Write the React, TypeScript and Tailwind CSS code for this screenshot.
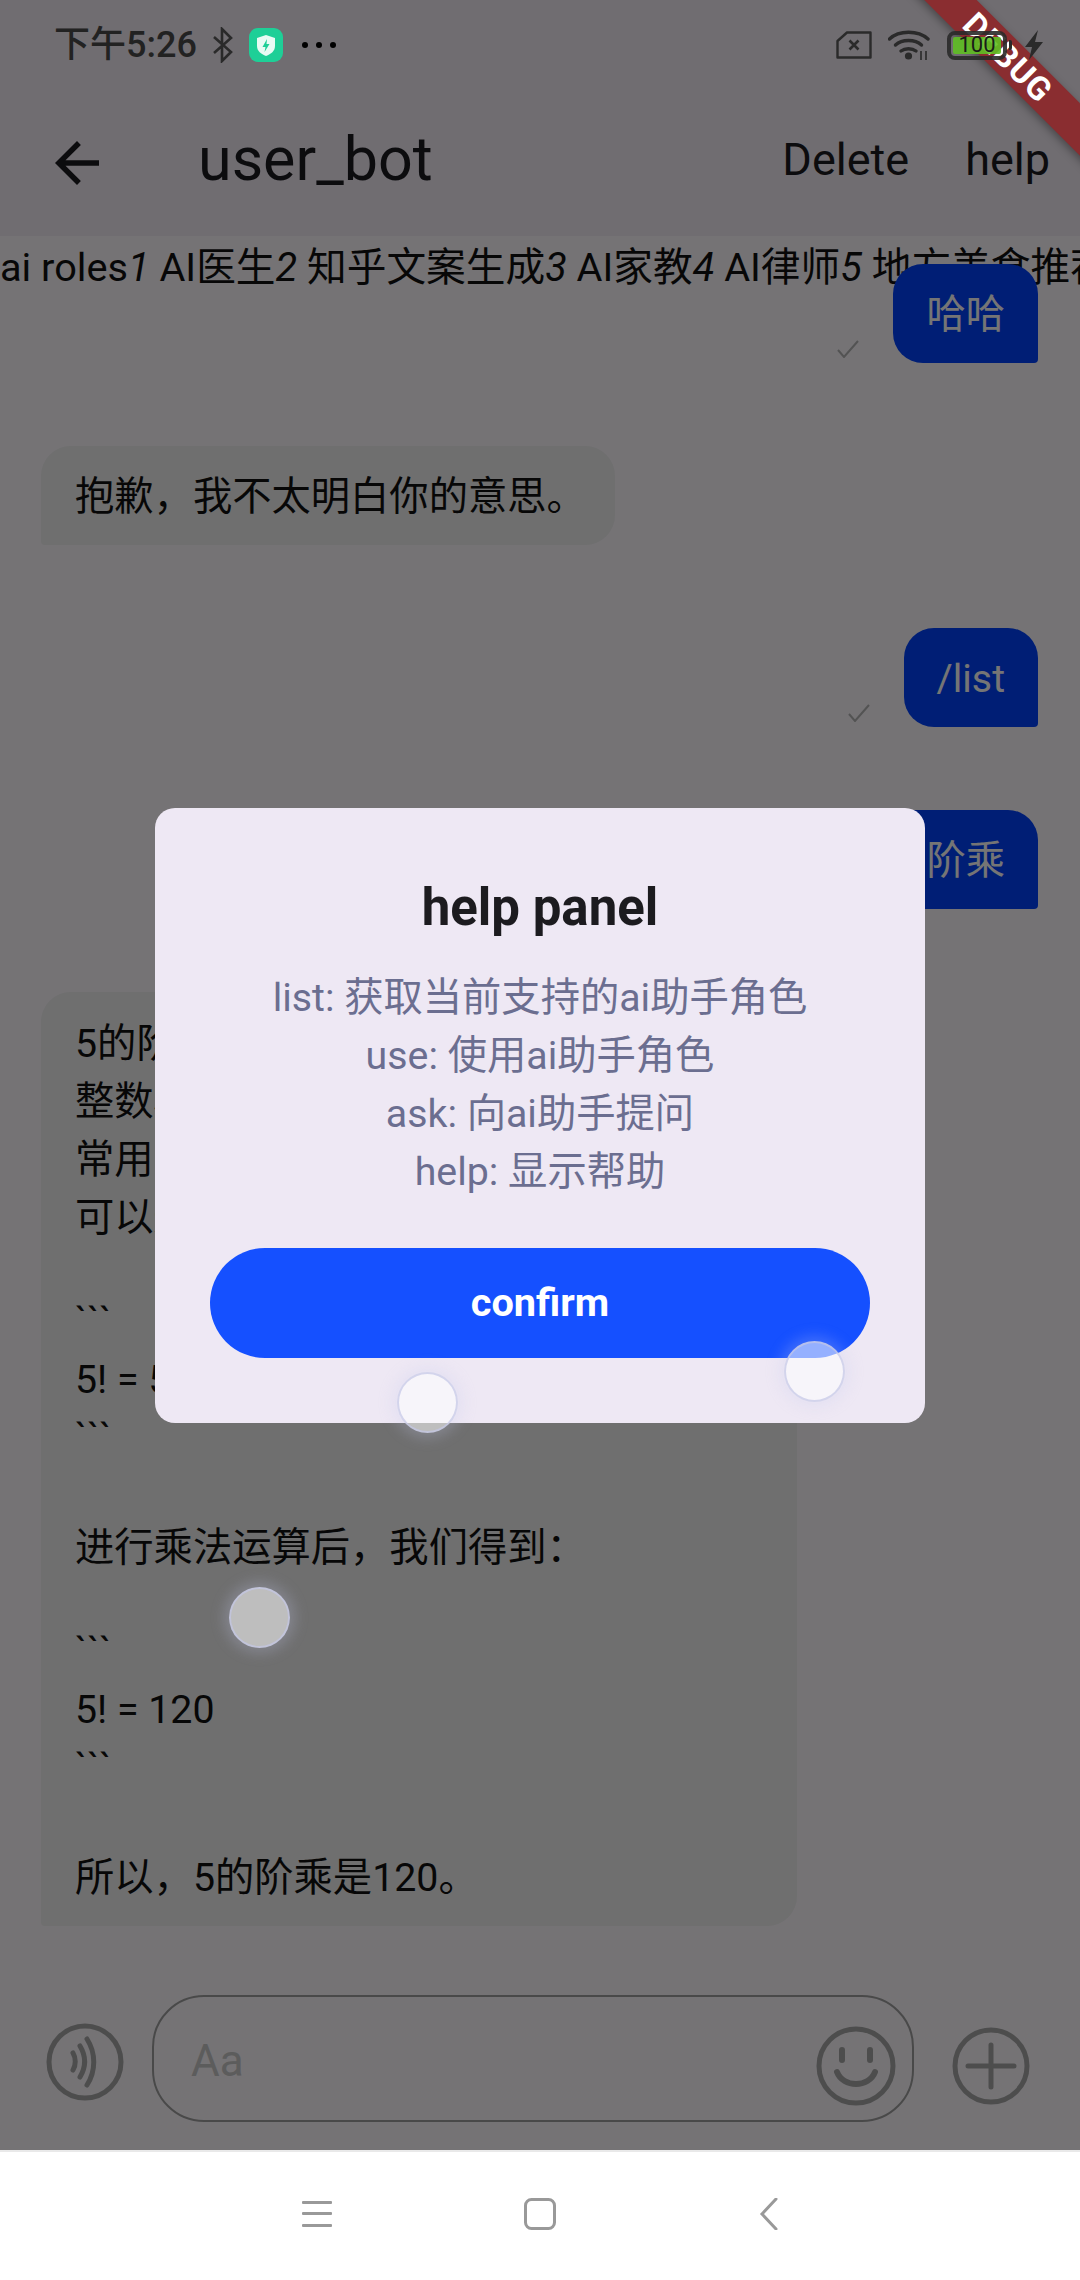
import React from 'react';

const StatusBar: React.FC = () => (
    <div className="absolute top-0 left-0 right-0 h-[90px] flex items-center justify-between pl-[54px] pr-[36px] text-[#222222]">
        <div className="flex items-center">
            <span className="text-[36px] font-medium leading-none w-[140px] whitespace-nowrap">下午5:26</span>
            <svg className="ml-[18px]" width="22" height="36" viewBox="0 0 22 36" fill="none" stroke="#2a2a2a" strokeWidth="2.6">
                <path d="M2 10 L19 25 L10 34 V2 L19 11 L2 26" />
            </svg>
            <svg className="ml-[15px]" width="34" height="34" viewBox="0 0 34 34">
                <rect width="34" height="34" rx="9" fill="#1ecf97" />
                <path d="M17 7 L26 10 V18 C26 23 22 26 17 28 C12 26 8 23 8 18 V10 Z" fill="#e8fbf4" />
                <path d="M18 11 L13.5 19 H16.5 L15.5 24 L20.5 16 H17.5 Z" fill="#1ecf97" />
            </svg>
            <div className="ml-[19px] flex gap-[8px]">
                <span className="w-[6px] h-[6px] rounded-full bg-black" />
                <span className="w-[6px] h-[6px] rounded-full bg-black" />
                <span className="w-[6px] h-[6px] rounded-full bg-black" />
            </div>
        </div>
        <div className="flex items-center">
            <svg width="36" height="28" viewBox="0 0 36 28" fill="none" stroke="#2a2a2a" strokeWidth="2.4" strokeLinejoin="round">
                <path d="M11 1.5 H34.5 V26.5 H1.5 V10 Z" />
                <path d="M13.5 9.5 L22.5 18.5 M22.5 9.5 L13.5 18.5" strokeWidth="2.6" />
            </svg>
            <svg className="ml-[16px]" width="42" height="32" viewBox="0 0 42 32" fill="none" stroke="#2a2a2a" strokeWidth="3.4" strokeLinecap="round">
                <path d="M1.5 10 C11 1 30 1 40 10" />
                <path d="M7.5 16 C14 10 27 10 33.5 16" />
                <path d="M13 22 C17 19 24 19 28 22" />
                <circle cx="20.5" cy="27" r="3.6" fill="#2a2a2a" stroke="none" />
                <path d="M33 22 V31 M38 22 V31" strokeWidth="1.6" strokeLinecap="butt" />
            </svg>
            <div className="ml-[17px] relative w-[60px] h-[29px] rounded-[8px] border-[4px] border-[#2a2a2a]/90 p-[2px]">
                <div className="h-full rounded-[2px] bg-[#5fbf24]/90" />
                <span className="absolute inset-0 flex items-center justify-center text-[22px] leading-none text-[#1a1a1a]">100</span>
            </div>
            <span className="ml-[2px] w-[3px] h-[10px] rounded-r-[2px] bg-[#2a2a2a]" />
            <svg className="ml-[12px]" width="20" height="30" viewBox="0 0 20 30" fill="#2a2a2a">
                <path d="M14 0 L1 17 H8 L5 30 L19 12 H11 Z" />
            </svg>
        </div>
    </div>
);

const Tick: React.FC = () => (
    <svg className="mb-[5px]" width="24" height="18" viewBox="0 0 24 18" fill="none" stroke="#b5b5b5" strokeWidth="2">
        <path d="M2 10 L8 17 L22 1" />
    </svg>
);

const Outgoing: React.FC<{ text: string; tick?: boolean }> = ({ text, tick }) => (
    <div className="flex justify-end items-end gap-[33px]">
        {tick && <Tick />}
        <div className="bg-[#0043ff] text-white text-[39.3px] leading-[57px] px-[33px] pt-[23px] pb-[19px] rounded-[30px] rounded-br-[4px]">
            {text}
        </div>
    </div>
);

const answer: (string | number)[] = [
    '5的阶乘是指从1到5的所有',
    '整数相乘的结果，这是一个',
    '常用的数学运算，我们',
    '可以这样来计算它：',
    46,
    '```',
    '5! = 5 × 4 × 3 × 2 × 1',
    '```',
    52,
    '进行乘法运算后，我们得到：',
    46,
    '```',
    '5! = 120',
    '```',
    52,
    '所以，5的阶乘是120。',
];

const TouchDot: React.FC<{ className: string }> = ({ className }) => (
    <div className={`absolute w-[61px] h-[61px] rounded-full bg-white/55 border-[2px] border-[#c3c6e6]/70 shadow-[0_0_14px_5px_rgba(200,205,240,0.25)] ${className}`} />
);

const Chat: React.FC = () => (
    <div className="h-full flex flex-col bg-[#fefaff] overflow-hidden">
        {/* App bar */}
        <div className="h-[236px] shrink-0 bg-[#f3edf7] pt-[82px] pl-[44px] pr-[30px] flex items-center text-[#1c1b1f]">
            <svg className="mt-[8px]" width="66" height="66" viewBox="0 0 24 24" fill="#1c1b1f">
                <path d="M20 11H7.83l5.59-5.59L12 4l-8 8 8 8 1.41-1.41L7.83 13H20v-2z" />
            </svg>
            <span className="ml-[88px] text-[61px] leading-none flex-1">user_bot</span>
            <span className="text-[45px] leading-none">Delete</span>
            <span className="ml-[56px] text-[45px] leading-none">help</span>
        </div>

        <div className="h-[64px] shrink-0 text-[39.7px] leading-[64px] whitespace-nowrap overflow-hidden text-[#111111]">
            ai roles<i>1</i> AI医生<i>2</i> 知乎文案生成<i>3</i> AI家教<i>4</i> AI律师<i>5</i> 地方美食推荐
        </div>

        {/* Messages */}
        <div className="mt-[-36px] pl-[41px] pr-[42px] flex flex-col gap-[83px]">
            <Outgoing text="哈哈" tick />
            <div className="flex">
                <div className="bg-[#f1f1f1] text-[#111111] text-[39.3px] leading-[57px] pl-[34px] pr-[29px] pt-[23px] pb-[19px] rounded-[30px] rounded-bl-[4px]">
                    抱歉，我不太明白你的意思。
                </div>
            </div>
            <Outgoing text="/list" tick />
            <Outgoing text="5的阶乘" />
            <div className="w-[756px] bg-[#f1f1f1] text-[#111111] text-[39.3px] leading-[58px] pl-[34px] pr-[33px] pt-[23px] pb-[19px] rounded-[30px] rounded-bl-[4px]">
                {answer.map((line, i) =>
                    typeof line === 'number' ? (
                        <div key={i} style={{ height: line }} />
                    ) : (
                        <div key={i} className="whitespace-nowrap">{line}</div>
                    )
                )}
            </div>
        </div>

        {/* Input row */}
        <div className="absolute left-0 right-0 top-[1988px] h-[140px] pl-[46px] flex items-center">
            <svg className="mt-[8px]" width="78" height="78" viewBox="0 0 78 78" fill="none" stroke="#a9a9a9" strokeWidth="5" strokeLinecap="round">
                <circle cx="39" cy="39" r="36" />
                <path d="M27 30 C30 35 30 42 27 47" />
                <path d="M34 23 C40 33 40 44 34 54" />
                <path d="M41 16 C50 30 50 48 41 62" />
            </svg>
            <div className="ml-[28px] w-[762px] h-[127px] rounded-[52px] border-[2px] border-[#a0a0a0] flex items-center justify-between pl-[37px] pr-[16px]">
                <span className="mt-[5px] text-[44px] leading-none text-[#c8c8c8]">Aa</span>
                <svg className="mt-[15px]" width="80" height="80" viewBox="0 0 80 80" fill="none" stroke="#a9a9a9" strokeWidth="5" strokeLinecap="round">
                    <circle cx="40" cy="40" r="37" />
                    <path d="M26 24 V34 M54 24 V34" strokeWidth="6" />
                    <path d="M21 46 C27 62 53 62 59 46" strokeWidth="6" />
                </svg>
            </div>
            <svg className="ml-[38px] mt-[16px]" width="78" height="78" viewBox="0 0 78 78" fill="none" stroke="#a9a9a9" strokeWidth="5" strokeLinecap="round">
                <circle cx="39" cy="39" r="36" />
                <path d="M39 18 V60 M16 39 H62" />
            </svg>
        </div>
    </div>
);

const App: React.FC = () => {
    return (
        <div className="relative w-[1080px] h-[2280px] flex flex-col overflow-hidden bg-white font-['Roboto','Noto_Sans_CJK_SC',sans-serif]">
            <div className="relative h-[2150px] shrink-0 overflow-hidden">
                <Chat />

                {/* Dialog scrim */}
                <div className="absolute inset-0 bg-black/54" />

                {/* Help dialog */}
                <div className="absolute left-[155px] top-[808px] w-[770px] h-[615px] rounded-[20px] bg-[#eee8f4] px-[55px] pt-[72px] flex flex-col items-center">
                    <div className="text-[51px] font-bold leading-[56px] text-[#1c1b1f]">help panel</div>
                    <div className="mt-[33px] text-[39.3px] leading-[58px] text-[#6b6e90] text-center">
                        <div>list: 获取当前支持的ai助手角色</div>
                        <div>use: 使用ai助手角色</div>
                        <div>ask: 向ai助手提问</div>
                        <div>help: 显示帮助</div>
                    </div>
                    <button className="mt-[47px] w-full h-[110px] rounded-full bg-[#1550ff] text-white text-[39.7px] font-bold">
                        confirm
                    </button>
                </div>

                <TouchDot className="left-[397px] top-[1372px]" />
                <TouchDot className="left-[784px] top-[1341px]" />
                <TouchDot className="left-[229px] top-[1587px]" />
            </div>

            {/* Navigation bar */}
            <div className="h-[130px] shrink-0 border-t-[2px] border-[#e9e9e9] bg-white flex items-center justify-center pb-[4px]">
                <svg width="30" height="28" viewBox="0 0 30 28" fill="#999999">
                    <rect y="1" width="30" height="3" rx="1" />
                    <rect y="12" width="30" height="3" rx="1" />
                    <rect y="24" width="30" height="3" rx="1" />
                </svg>
                <svg className="ml-[192px]" width="32" height="32" viewBox="0 0 32 32" fill="none" stroke="#999999" strokeWidth="3">
                    <rect x="1.5" y="1.5" width="29" height="29" rx="6" />
                </svg>
                <svg className="ml-[203px]" width="20" height="32" viewBox="0 0 20 32" fill="none" stroke="#999999" strokeWidth="3" strokeLinecap="round">
                    <path d="M17 1 L3 16 L17 31" />
                </svg>
            </div>

            {/* Debug banner */}
            <div className="absolute left-[848px] top-[39px] w-[320px] h-[37px] rotate-45 bg-[#8a2d30] shadow-[0_3px_8px_rgba(0,0,0,0.35)] flex items-center justify-center text-white text-[33px] font-bold leading-none tracking-[1px]">
                DEBUG
            </div>

            {/* system icons are painted over the banner */}
            <StatusBar />
        </div>
    );
};

export default App;
